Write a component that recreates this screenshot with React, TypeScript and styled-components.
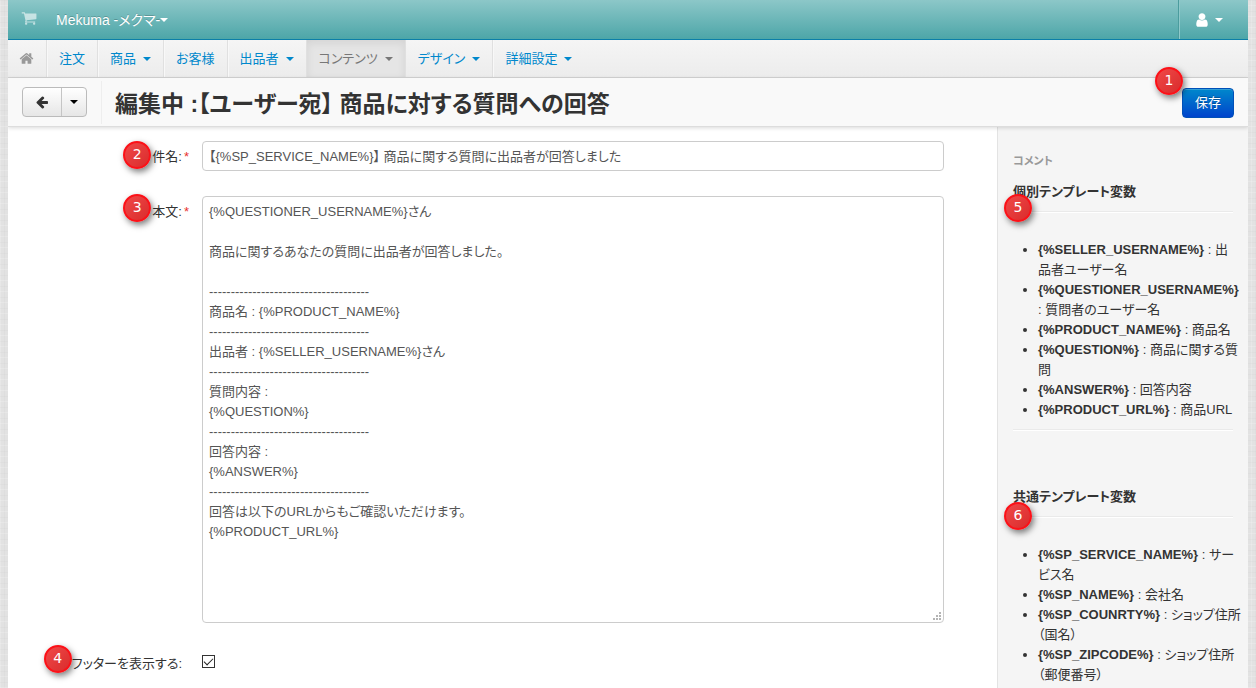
import React from "react";
import styled, { createGlobalStyle, css } from "styled-components";

const GlobalStyle = createGlobalStyle`
  *, *::before, *::after { box-sizing: border-box; }
  html { height: 100%; }
  body {
    margin: 0;
    min-height: 100%;
    padding: 0 8px;
    color: #333;
    font: 13px/20px "Liberation Sans", "Noto Sans CJK JP", sans-serif;
    font-feature-settings: "palt";
    background-color: #e2e2e2;
    background-image:
      repeating-linear-gradient(0deg, rgba(255,255,255,.18) 0 1px, transparent 1px 5px, rgba(0,0,0,.02) 5px 6px, transparent 6px 11px),
      repeating-linear-gradient(90deg, rgba(255,255,255,.18) 0 1px, transparent 1px 4px, rgba(0,0,0,.02) 4px 5px, transparent 5px 9px);
  }
  button, input, textarea { font: inherit; font-feature-settings: inherit; color: inherit; }
  a { text-decoration: none; color: inherit; }
`;

const Page = styled.div`
  display: flex;
  flex-direction: column;
  height: 100vh;
  min-height: 320px;
  overflow: hidden;
  background: #fff;
`;

const Glyph = styled.svg<{ $size: number }>`
  display: block;
  width: ${(p) => p.$size}px;
  height: ${(p) => p.$size}px;
  fill: currentColor;
`;

const ICONS = {
  cart: "M704 1536q0 52-38 90t-90 38-90-38-38-90 38-90 90-38 90 38 38 90zm896 0q0 52-38 90t-90 38-90-38-38-90 38-90 90-38 90 38 38 90zm128-1088v512q0 24-16.5 42.5t-40.5 21.5l-1044 122q13 60 13 70 0 16-24 64h920q26 0 45 19t19 45-19 45-45 19h-1024q-26 0-45-19t-19-45q0-11 8-31.5t16-36 21.5-40 15.5-29.5l-177-823h-204q-26 0-45-19t-19-45 19-45 45-19h256q16 0 28.5 6.5t19.5 15.5 13 24.5 8 26 5.5 29.5 4.5 26h1201q26 0 45 19t19 45z",
  home: "M1472 992v480q0 26-19 45t-45 19h-384v-384h-256v384h-384q-26 0-45-19t-19-45v-480q0-1 .5-3t.5-3l575-474 575 474q1 2 1 6zm223-69l-62 74q-8 9-21 11h-3q-13 0-21-7l-692-577-692 577q-12 8-24 7-13-2-21-11l-62-74q-8-10-7-23.5t11-21.5l719-599q32-26 76-26t76 26l244 204v-195q0-14 9-23t23-9h192q14 0 23 9t9 23v408l219 182q10 8 11 21.5t-7 23.5z",
  back: "M1664 896v128q0 53-32.5 90.5t-84.5 37.5h-704l293 294q38 36 38 90t-38 90l-75 76q-37 37-90 37-52 0-91-37l-651-652q-37-37-37-90 0-52 37-91l651-650q38-38 91-38 52 0 90 38l75 74q38 38 38 91t-38 91l-293 293h704q52 0 84.5 37.5t32.5 90.5z",
  user: "M1536 1399q0 109-62.5 187t-150.5 78h-854q-88 0-150.5-78t-62.5-187q0-85 8.5-160.5t31.5-152 58.5-131 94-89 134.5-34.5q131 128 313 128t313-128q76 0 134.5 34.5t94 89 58.5 131 31.5 152 8.5 160.5zm-256-887q0 159-112.5 271.5t-271.5 112.5-271.5-112.5-112.5-271.5 112.5-271.5 271.5-112.5 271.5 112.5 112.5 271.5z",
};

function Icon({ name, size }: { name: keyof typeof ICONS; size: number }) {
  return (
    <Glyph $size={size} viewBox="0 0 1792 1792" aria-hidden="true">
      <path d={ICONS[name]} />
    </Glyph>
  );
}

const TopBar = styled.header`
  display: flex;
  flex: none;
  height: 40px;
  align-items: stretch;
  border-bottom: 1px solid #0c7fa8;
  background: linear-gradient(#8cc7c8, #4da6a8);
  color: #fff;
`;

const CartLink = styled.a`
  padding: 10px 19px 0 13px;
  opacity: 0.6;
`;

const ShopLink = styled.a`
  display: flex;
  align-items: center;
  font-size: 14px;
  text-shadow: 0 -1px 0 rgba(0, 0, 0, 0.2);
`;

const UserLink = styled.a`
  display: flex;
  align-items: center;
  gap: 5px;
  margin-left: auto;
  padding: 0 25px 0 14px;
  border-left: 1px solid #8fc9ca;
  box-shadow: -1px 0 0 #4b9c9e;
`;

const Caret = styled.span`
  width: 0;
  height: 0;
  border-top: 4px solid currentColor;
  border-left: 4px solid transparent;
  border-right: 4px solid transparent;
`;

const MainNav = styled.nav`
  display: flex;
  flex: none;
  height: 38px;
  border-bottom: 1px solid #d4d4d4;
  background: linear-gradient(#f5f5f5, #ececec);
`;

const NavLink = styled.a<{ $active?: boolean }>`
  display: flex;
  align-items: center;
  gap: 7px;
  padding: 0 12px;
  border-right: 1px solid #e0e0e0;
  box-shadow: 1px 0 0 #f8f8f8;
  color: #08c;
  white-space: nowrap;
  &:last-child { border-right: 0; box-shadow: none; }
  ${(p) => p.$active && css`
    color: #777;
    background: #e5e5e5;
    box-shadow: inset 0 3px 8px rgba(0, 0, 0, 0.08);
  `}
`;

const HomeLink = styled(NavLink)`
  padding: 0 12px 0 11px;
  color: #999;
`;

const TitleBar = styled.div`
  position: relative;
  display: flex;
  flex: none;
  align-items: center;
  height: 49px;
  padding: 0 14px;
  border-bottom: 1px solid #ddd;
  background: #f9f9f9;
  box-shadow: 0 1px 4px rgba(0, 0, 0, 0.15);
`;

const ButtonGroup = styled.div`
  display: flex;
  height: 30px;
  overflow: hidden;
  border: 1px solid #bbb;
  border-radius: 4px;
  background: linear-gradient(#fff, #e6e6e6);
`;

const GroupButton = styled.button`
  display: flex;
  align-items: center;
  padding: 0 12px;
  border: 0;
  background: none;
  & + & { padding: 0 8px; border-left: 1px solid #c5c5c5; color: #000; }
`;

const Title = styled.h1`
  flex: 1;
  margin: 0 0 0 14px;
  padding: 3px 0 0 13px;
  border-left: 1px solid #eee;
  font-size: 23px;
  line-height: 40px;
`;

const SaveWrap = styled.div`
  position: relative;
  margin-top: 2px;
`;

const SaveButton = styled.button`
  display: block;
  height: 30px;
  padding: 0 12px;
  border: 1px solid #0050b8;
  border-radius: 4px;
  background: linear-gradient(#0088cc, #0044cc);
  box-shadow: inset 0 1px 0 rgba(255, 255, 255, 0.2);
  color: #fff;
  text-shadow: 0 -1px 0 rgba(0, 0, 0, 0.25);
`;

const Badge = styled.span<{ $x: number; $y: number }>`
  position: absolute;
  left: ${(p) => p.$x}px;
  top: ${(p) => p.$y}px;
  z-index: 2;
  width: 28px;
  height: 28px;
  border: 2px solid #fb1118;
  border-radius: 50%;
  background: linear-gradient(135deg, #f04848, #d92c2c);
  box-shadow: 2px 3px 6px rgba(0, 0, 0, 0.5);
  color: #fff;
  font: 14px/23px "DejaVu Sans", sans-serif;
  text-align: center;
`;

const Content = styled.div`
  display: flex;
  flex: 1;
  min-height: 0;
`;

const Form = styled.form`
  flex: 1;
  min-width: 0;
  padding: 14px 53px 0 14px;
`;

const Field = styled.div`
  display: grid;
  grid-template-columns: 168px minmax(0, 1fr);
  column-gap: 12px;
  align-items: start;
  margin-bottom: 25px;
`;

const Label = styled.label<{ $optional?: boolean }>`
  position: relative;
  justify-self: end;
  padding: 6px ${(p) => (p.$optional ? 8 : 1)}px 0 0;
  white-space: nowrap;
`;

const Required = styled.span`
  margin-left: 2px;
  color: #e9322d;
`;

const fieldBox = css`
  display: block;
  width: 100%;
  border: 1px solid #ccc;
  border-radius: 4px;
  background: #fff;
  color: #555;
  outline: 0;
`;

const TextInput = styled.input`
  ${fieldBox}
  height: 30px;
  padding: 3px 6px 5px;
`;

const gripDot = "linear-gradient(#b4b4b4, #b4b4b4)";

const TextArea = styled.textarea`
  ${fieldBox}
  height: 427px;
  padding: 5px 6px;
  resize: vertical;
  overflow: auto;
  &::-webkit-resizer {
    background-image: ${Array(6).fill(gripDot).join(", ")};
    background-repeat: no-repeat;
    background-size: 2px 2px;
    background-position:
      right 2px bottom 2px, right 5px bottom 2px, right 8px bottom 2px,
      right 2px bottom 5px, right 5px bottom 5px, right 2px bottom 8px;
  }
`;

const CheckBox = styled.input`
  appearance: none;
  display: grid;
  place-items: center;
  width: 13px;
  height: 13px;
  margin: 7px 0 0;
  border: 1px solid #333;
  background: #fff;
  &:checked::before {
    content: "";
    width: 9px;
    height: 5px;
    margin-bottom: 3px;
    border-left: 1px solid #222;
    border-bottom: 1px solid #222;
    transform: rotate(-45deg);
  }
`;

const Sidebar = styled.aside`
  flex: none;
  width: 251px;
  padding: 24px 15px 0;
  border-left: 1px solid #e3e3e3;
  background: #f5f5f5;
`;

const SidebarTitle = styled.h2`
  margin: 0 0 11px;
  color: #999;
  font-size: 11px;
  line-height: 20px;
`;

const Group = styled.section`
  margin-bottom: 57px;
`;

const GroupTitle = styled.h3`
  position: relative;
  margin: 0;
  padding-bottom: 9px;
  border-bottom: 1px solid #eaeaea;
  box-shadow: 0 1px 0 #fff;
  font-size: 13px;
  line-height: 20px;
`;

const VarList = styled.ul`
  margin: 0;
  padding: 28px 0 9px 25px;
  border-bottom: 1px solid #eaeaea;
  box-shadow: 0 1px 0 #fff;
`;

const VarItem = styled.li`
  white-space: pre;
`;

const NAV = [
  { label: "注文" },
  { label: "商品", menu: true },
  { label: "お客様" },
  { label: "出品者", menu: true },
  { label: "コンテンツ", menu: true, active: true },
  { label: "デザイン", menu: true },
  { label: "詳細設定", menu: true },
];

const RULE = "-".repeat(37);

const BODY = [
  "{%QUESTIONER_USERNAME%}さん",
  "",
  "商品に関するあなたの質問に出品者が回答しました。",
  "",
  RULE,
  "商品名 : {%PRODUCT_NAME%}",
  RULE,
  "出品者 : {%SELLER_USERNAME%}さん",
  RULE,
  "質問内容 :",
  "{%QUESTION%}",
  RULE,
  "回答内容 :",
  "{%ANSWER%}",
  RULE,
  "回答は以下のURLからもご確認いただけます。",
  "{%PRODUCT_URL%}",
].join("\n");

const GROUPS = [
  {
    title: "個別テンプレート変数",
    mark: 5,
    markTop: 12,
    items: [
      ["{%SELLER_USERNAME%}", " : 出\n品者ユーザー名"],
      ["{%QUESTIONER_USERNAME%}", "\n: 質問者のユーザー名"],
      ["{%PRODUCT_NAME%}", " : 商品名"],
      ["{%QUESTION%}", " : 商品に関する質\n問"],
      ["{%ANSWER%}", " : 回答内容"],
      ["{%PRODUCT_URL%}", " : 商品URL"],
    ],
  },
  {
    title: "共通テンプレート変数",
    mark: 6,
    markTop: 15,
    items: [
      ["{%SP_SERVICE_NAME%}", " : サー\nビス名"],
      ["{%SP_NAME%}", " : 会社名"],
      ["{%SP_COUNRTY%}", " : ショップ住所\n（国名）"],
      ["{%SP_ZIPCODE%}", " : ショップ住所\n（郵便番号）"],
    ],
  },
];

export default function App() {
  return (
    <Page>
      <GlobalStyle />
      <TopBar>
        <CartLink href="#" aria-label="Cart"><Icon name="cart" size={16} /></CartLink>
        <ShopLink href="#">Mekuma -メクマ-<Caret /></ShopLink>
        <UserLink href="#" aria-label="Account"><Icon name="user" size={16} /><Caret /></UserLink>
      </TopBar>
      <MainNav>
        <HomeLink href="#" aria-label="Home"><Icon name="home" size={15} /></HomeLink>
        {NAV.map((n) => (
          <NavLink key={n.label} href="#" $active={n.active}>
            {n.label}
            {n.menu && <Caret />}
          </NavLink>
        ))}
      </MainNav>
      <TitleBar>
        <ButtonGroup>
          <GroupButton type="button" aria-label="Back"><Icon name="back" size={14} /></GroupButton>
          <GroupButton type="button" aria-label="More"><Caret /></GroupButton>
        </ButtonGroup>
        <Title>編集中 :【ユーザー宛】 商品に対する質問への回答</Title>
        <SaveWrap>
          <SaveButton type="button">保存</SaveButton>
          <Badge $x={-27} $y={-21}>1</Badge>
        </SaveWrap>
      </TitleBar>
      <Content>
        <Form>
          <Field>
            <Label htmlFor="subject">
              <Badge $x={-29} $y={0}>2</Badge>
              件名:<Required>*</Required>
            </Label>
            <TextInput id="subject" defaultValue="【{%SP_SERVICE_NAME%}】 商品に関する質問に出品者が回答しました" />
          </Field>
          <Field>
            <Label htmlFor="body">
              <Badge $x={-29} $y={-2}>3</Badge>
              本文:<Required>*</Required>
            </Label>
            <TextArea id="body" defaultValue={BODY} />
          </Field>
          <Field>
            <Label htmlFor="footer" $optional>
              <Badge $x={-28} $y={-3}>4</Badge>
              フッターを表示する:
            </Label>
            <CheckBox id="footer" type="checkbox" defaultChecked />
          </Field>
        </Form>
        <Sidebar>
          <SidebarTitle>コメント</SidebarTitle>
          {GROUPS.map((g) => (
            <Group key={g.title}>
              <GroupTitle>
                {g.title}
                <Badge $x={-9} $y={g.markTop}>{g.mark}</Badge>
              </GroupTitle>
              <VarList>
                {g.items.map(([name, text]) => (
                  <VarItem key={name}><strong>{name}</strong>{text}</VarItem>
                ))}
              </VarList>
            </Group>
          ))}
        </Sidebar>
      </Content>
    </Page>
  );
}
